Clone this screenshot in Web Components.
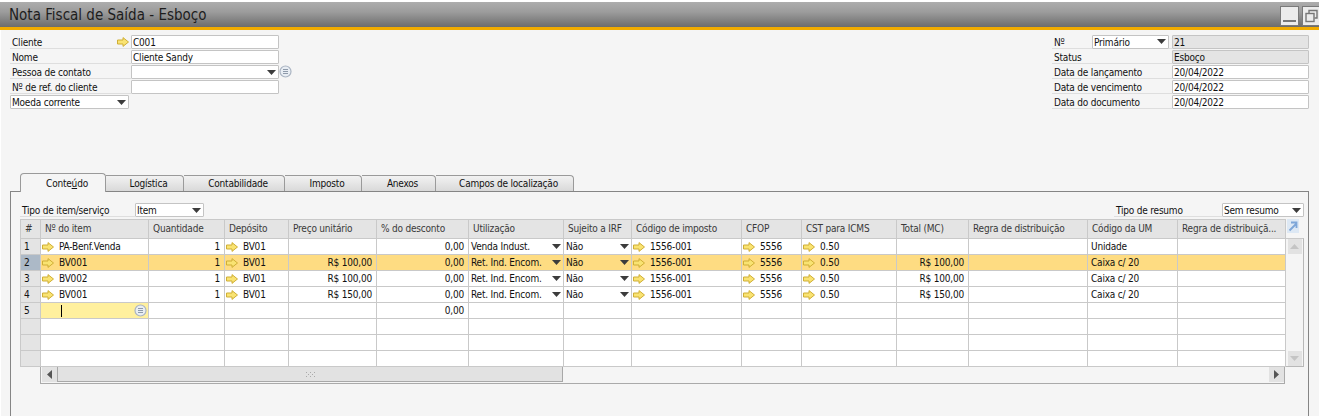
<!DOCTYPE html>
<html lang="pt">
<head>
<meta charset="utf-8">
<title>Nota Fiscal de Saída - Esboço</title>
<style>
    html, body { margin: 0; padding: 0; background: #fff; }
    body { font: 10px "DejaVu Sans Condensed", "DejaVu Sans", sans-serif; letter-spacing: -0.2px; color: #111; }
</style>
</head>
<body>
<sap-window>
    <sap-titlebar>Nota Fiscal de Saída - Esboço</sap-titlebar>
    <sap-header>
        <sap-form slot="left" style="--label-w:121px">
            <sap-row arrow>Cliente<sap-field slot="control" style="width:148px">C001</sap-field></sap-row>
            <sap-row>Nome<sap-field slot="control" style="width:148px">Cliente Sandy</sap-field></sap-row>
            <sap-row>Pessoa de contato<sap-field slot="control" dropdown style="width:148px"></sap-field><sap-info slot="control"></sap-info></sap-row>
            <sap-row>Nº de ref. do cliente<sap-field slot="control" style="width:148px"></sap-field></sap-row>
            <sap-field dropdown style="width:119px">Moeda corrente</sap-field>
        </sap-form>
        <sap-form slot="right" style="--label-w:120px">
            <sap-row><sap-number-label slot="label"></sap-number-label><sap-field slot="control" readonly style="width:137px">21</sap-field></sap-row>
            <sap-row>Status<sap-field slot="control" readonly style="width:137px">Esboço</sap-field></sap-row>
            <sap-row>Data de lançamento<sap-field slot="control" style="width:137px">20/04/2022</sap-field></sap-row>
            <sap-row>Data de vencimento<sap-field slot="control" style="width:137px">20/04/2022</sap-field></sap-row>
            <sap-row>Data do documento<sap-field slot="control" style="width:137px">20/04/2022</sap-field></sap-row>
        </sap-form>
    </sap-header>
    <sap-tabs>
        <sap-tab slot="tabs" active style="width:86px">Conte<u>ú</u>do</sap-tab>
        <sap-tab slot="tabs" style="width:78px">Logística</sap-tab>
        <sap-tab slot="tabs" style="width:101px">Contabilidade</sap-tab>
        <sap-tab slot="tabs" style="width:77px">Imposto</sap-tab>
        <sap-tab slot="tabs" style="width:74px">Anexos</sap-tab>
        <sap-tab slot="tabs" style="width:138px">Campos de localização</sap-tab>
        <sap-toolbar>
            <sap-form slot="left" style="--label-w:115px"><sap-row>Tipo de item/serviço<sap-field slot="control" dropdown style="width:69px">Item</sap-field></sap-row></sap-form>
            <sap-form slot="right" style="--label-w:108px"><sap-row>Tipo de resumo<sap-field slot="control" dropdown style="width:82px">Sem resumo</sap-field></sap-row></sap-form>
        </sap-toolbar>
        <sap-grid></sap-grid>
    </sap-tabs>
</sap-window>

<script>
const ARROW_SVG = `<svg width="12" height="10" viewBox="0 0 12 10" style="display:block;flex:none"><path d="M.5 3H6V.6L11.500 5 6 9.400V7H.5Z" fill="#f9e372" stroke="#cfae35" stroke-width="1"/></svg>`;
const CARET_SVG = `<svg width="9" height="5" viewBox="0 0 9 5" style="display:block;flex:none"><path d="M0 0H9L4.500 5Z" fill="#3c3c3c"/></svg>`;
const INFO_SVG = `<svg width="13" height="13" viewBox="0 0 13 13" style="display:block;flex:none"><circle cx="6.500" cy="6.500" r="5.500" fill="#e8edf3" stroke="#aab4c2" stroke-width="1.200"/><path d="M4 4.500H9M4 6.500H9M4 8.500H9" stroke="#8e9aaa" stroke-width="1"/></svg>`;

class SapWindow extends HTMLElement {
    connectedCallback() {
        this.attachShadow({ mode: 'open' });
        this.shadowRoot.innerHTML = `
      <style>
        :host { display: flex; flex-direction: column; height: 416px; overflow: hidden; background: #f5f5f5; box-shadow: inset 1px 0 #fff; }
      </style>
      <slot></slot>
    `;
    }
}

class SapTitlebar extends HTMLElement {
    connectedCallback() {
        this.attachShadow({ mode: 'open' });
        this.shadowRoot.innerHTML = `
      <style>
        :host { display: block; background: #fff; padding-top: 2px; flex: none; }
        .bar {
          height: 25px;
          box-sizing: border-box;
          background: linear-gradient(#adadad, #9c9c9c 40%, #6c6c6c);
          display: flex;
          align-items: center;
          justify-content: space-between;
          padding-left: 9px;
          font-size: 15px;
          letter-spacing: 0;
          color: #1d1d1d;
        }
        .line { height: 3px; background: #f0ab00; }
        .btns { display: flex; gap: 3px; margin-top: 3px; }
        .btn { box-sizing: border-box; width: 19px; height: 20px; border: 1px solid #7a7a7a; background: #ececec; display: flex; align-items: center; justify-content: center; }
        .btn:last-child { width: 17px; border-right: 0; }
      </style>
      <div class="bar">
        <span><slot></slot></span>
        <div class="btns">
          <div class="btn"><svg width="15" height="16" viewBox="0 0 15 16"><rect x="1" y="12" width="13" height="2" fill="#777"/></svg></div>
          <div class="btn"><svg width="15" height="16" viewBox="0 0 15 16" fill="none" stroke="#777" stroke-width="1.400"><path d="M5 5V2.500H13V10H10.500"/><rect x="2" y="5.500" width="8" height="8"/></svg></div>
        </div>
      </div>
      <div class="line"></div>
    `;
    }
}

class SapHeader extends HTMLElement {
    connectedCallback() {
        this.attachShadow({ mode: 'open' });
        this.shadowRoot.innerHTML = `
      <style>
        :host { display: flex; justify-content: space-between; padding: 5px 10px 0 10px; flex: none; }
      </style>
      <slot name="left"></slot>
      <slot name="right"></slot>
    `;
    }
}

class SapForm extends HTMLElement {
    connectedCallback() {
        this.attachShadow({ mode: 'open' });
        this.shadowRoot.innerHTML = `
      <style>
        :host { display: flex; flex-direction: column; gap: 1px; }
      </style>
      <slot></slot>
    `;
    }
}

class SapRow extends HTMLElement {
    connectedCallback() {
        this.attachShadow({ mode: 'open' });
        const arrow = this.hasAttribute('arrow') ? `<span class="arrow">${ARROW_SVG}</span>` : '';
        this.shadowRoot.innerHTML = `
      <style>
        :host { display: flex; height: 14px; }
        .label {
          box-sizing: border-box;
          width: var(--label-w, 120px);
          height: 14px;
          padding-left: 2px;
          line-height: 14px;
          border-bottom: 1px solid #dedede;
          display: flex;
          justify-content: space-between;
          align-items: center;
          white-space: nowrap;
          flex: none;
        }
        .t { padding-top: 2px; }
        .arrow { margin-right: 2px; }
      </style>
      <div class="label"><span class="t"><slot></slot></span><slot name="label"></slot>${arrow}</div>
      <slot name="control"></slot>
    `;
    }
}

class SapField extends HTMLElement {
    connectedCallback() {
        this.attachShadow({ mode: 'open' });
        const caret = this.hasAttribute('dropdown') ? `<span class="caret">${CARET_SVG}</span>` : '';
        this.shadowRoot.innerHTML = `
      <style>
        :host {
          display: flex;
          box-sizing: border-box;
          height: 14px;
          padding: 0 2px 0 1px;
          line-height: 12px;
          background: #fff;
          border: 1px solid #c4c4c4;
          border-radius: 1px;
          justify-content: space-between;
          align-items: center;
          white-space: nowrap;
          flex: none;
        }
        :host([readonly]) { background: #e4e4e4; }
        .t { padding-top: 2px; }
      </style>
      <span class="t"><slot></slot></span>${caret}
    `;
    }
}

class SapNumberLabel extends HTMLElement {
    connectedCallback() {
        this.attachShadow({ mode: 'open' });
        this.shadowRoot.innerHTML = `
      <style>
        :host { display: flex; align-items: center; width: 118px; height: 13px; }
        span { width: 38px; padding-top: 2px; }
      </style>
      <span>Nº</span>
      <sap-field dropdown style="width:77px">Primário</sap-field>
    `;
    }
}

class SapInfo extends HTMLElement {
    connectedCallback() {
        this.attachShadow({ mode: 'open' });
        this.shadowRoot.innerHTML = `
      <style>:host { display: block; flex: none; }</style>
      ${INFO_SVG}
    `;
    }
}

class SapTabs extends HTMLElement {
    connectedCallback() {
        this.attachShadow({ mode: 'open' });
        this.shadowRoot.innerHTML = `
      <style>
        :host { display: flex; flex-direction: column; flex: 1; margin: 64px 10px 0 10px; min-height: 0; }
        .strip { display: flex; align-items: flex-end; height: 18px; padding-left: 10px; position: relative; z-index: 1; }
        .panel {
          flex: 1;
          border: 1px solid #858585;
          border-bottom: 0;
          padding: 11px 0 0 9px;
        }
      </style>
      <div class="strip"><slot name="tabs"></slot></div>
      <div class="panel"><slot></slot></div>
    `;
    }
}

class SapTab extends HTMLElement {
    connectedCallback() {
        this.attachShadow({ mode: 'open' });
        this.shadowRoot.innerHTML = `
      <style>
        :host {
          display: flex;
          box-sizing: border-box;
          height: 16px;
          padding-left: 8px;
          align-items: center;
          justify-content: center;
          background: linear-gradient(#f2f2f2, #d9d9d9);
          border: 1px solid #9a9a9a;
          border-bottom: 0;
          border-left: 0;
          border-radius: 0 4px 0 0;
          white-space: nowrap;
          flex: none;
        }
        :host([active]) {
          height: 19px;
          margin-bottom: -1px;
          background: #f5f5f5;
          border-left: 1px solid #9a9a9a;
          border-radius: 4px 4px 0 0;
        }
      </style>
      <slot></slot>
    `;
    }
}

class SapToolbar extends HTMLElement {
    connectedCallback() {
        this.attachShadow({ mode: 'open' });
        this.shadowRoot.innerHTML = `
      <style>
        :host { display: flex; justify-content: space-between; width: 1284px; box-sizing: border-box; height: 16px; }
      </style>
      <slot name="left"></slot>
      <slot name="right"></slot>
    `;
    }
}

const COLUMNS = [
    ['#', 20], ['Nº do item', 108], ['Quantidade', 76], ['Depósito', 64], ['Preço unitário', 88],
    ['% do desconto', 92], ['Utilização', 95], ['Sujeito a IRF', 68], ['Código de imposto', 110],
    ['CFOP', 60], ['CST para ICMS', 95], ['Total (MC)', 72], ['Regra de distribuição', 119],
    ['Código da UM', 90], ['Regra de distribuiçã...', 108]
];

const ROWS = [
    ['PA-Benf.Venda', '1', 'BV01', '', '0,00', 'Venda Indust.', 'Não', '1556-001', '5556', '0.50', '', '', 'Unidade', ''],
    ['BV001', '1', 'BV01', 'R$ 100,00', '0,00', 'Ret. Ind. Encom.', 'Não', '1556-001', '5556', '0.50', 'R$ 100,00', '', 'Caixa c/ 20', ''],
    ['BV002', '1', 'BV01', 'R$ 100,00', '0,00', 'Ret. Ind. Encom.', 'Não', '1556-001', '5556', '0.50', 'R$ 100,00', '', 'Caixa c/ 20', ''],
    ['BV001', '1', 'BV01', 'R$ 150,00', '0,00', 'Ret. Ind. Encom.', 'Não', '1556-001', '5556', '0.50', 'R$ 150,00', '', 'Caixa c/ 20', '']
];

// column kinds, by index in a row: a = arrow link, r = right aligned, d = dropdown
const KINDS = ['a', 'r', 'a', 'r', 'r', 'd', 'd', 'a', 'a', 'a', 'r', '', '', ''];

class SapGrid extends HTMLElement {
    renderCell(kind, text, extra) {
        if (text === '') return `<div class="c ${extra}"></div>`;
        if (kind === 'a') return `<div class="c link ${extra}">${ARROW_SVG}<span>${text}</span></div>`;
        if (kind === 'd') return `<div class="c drop ${extra}"><span>${text}</span>${CARET_SVG}</div>`;
        if (kind === 'r') return `<div class="c right ${extra}">${text}</div>`;
        return `<div class="c ${extra}">${text}</div>`;
    }

    connectedCallback() {
        this.attachShadow({ mode: 'open' });
        let cells = COLUMNS.map(c => `<div class="c head">${c[0]}</div>`).join('');
        ROWS.forEach((row, i) => {
            const sel = i === 1 ? 'sel' : '';
            cells += `<div class="c num ${i === 1 ? 'numsel' : ''}">${i + 1}</div>`;
            cells += row.map((text, j) => this.renderCell(KINDS[j], text, sel)).join('');
        });
        // row 5 holds the cursor, the rest are empty
        cells += `<div class="c num">5</div><div class="c active"><i class="cursor"></i>${INFO_SVG}</div>`;
        cells += ROWS[0].slice(1).map((t, j) => this.renderCell(j === 3 ? 'r' : '', j === 3 ? '0,00' : '', '')).join('');
        for (let r = 0; r < 3; r++) {
            cells += COLUMNS.map((c, j) => `<div class="c ${j === 0 ? 'num' : ''}"></div>`).join('');
        }
        const cols = COLUMNS.map(c => c[1] + 'px').join(' ');
        this.shadowRoot.innerHTML = `
      <style>
        :host { display: grid; grid-template-columns: 1266px 18px; grid-template-rows: auto 17px; width: 1284px; color: #111; }
        .table {
          display: grid;
          grid-template-columns: ${cols};
          grid-template-rows: 19px repeat(8, 16px);
          border-left: 1px solid #c9c9c9;
          border-top: 1px solid #c9c9c9;
          background: #fff;
        }
        .c {
          box-sizing: border-box;
          border-right: 1px solid #c9c9c9;
          border-bottom: 1px solid #c9c9c9;
          padding: 0 4px 0 3px;
          line-height: 15px;
          white-space: nowrap;
          overflow: hidden;
          display: flex;
          align-items: center;
        }
        .head { background: #e4e4e4; color: #3a3a3a; padding-left: 4px; padding-bottom: 1px; }
        .num { background: #e4e4e4; padding-left: 3px; }
        .numsel { background: #acb9c7; }
        .sel { background: #fedc82; }
        .active { background: #fff09e; justify-content: space-between; padding: 0 1px 0 20px; }
        .cursor { width: 1px; height: 12px; background: #000; }
        .right { justify-content: flex-end; }
        .link { padding-left: 1px; }
        .link span { margin-left: 5px; }
        .drop { justify-content: space-between; padding: 0 2px 0 2px; }
        .side { display: flex; flex-direction: column; }
        .corner { height: 19px; display: flex; align-items: flex-start; padding-left: 1px; }
        .vtrack {
          flex: 1;
          box-sizing: border-box;
          border-top: 1px solid #c9c9c9;
          border-right: 1px solid #b8b8b8;
          border-bottom: 1px solid #b8b8b8;
          display: flex;
          flex-direction: column;
          justify-content: space-between;
          align-items: center;
        }
        .vbtn { width: 14px; height: 15px; background: #e2e2e2; display: flex; align-items: center; justify-content: center; }
        .hscroll {
          margin-left: 20px;
          box-sizing: border-box;
          height: 17px;
          border-left: 1px solid #aaa;
          border-right: 1px solid #aaa;
          border-bottom: 1px solid #aaa;
          padding: 0 0 1px 1px;
          display: flex;
          align-items: stretch;
          width: 1245px;
        }
        .hbtn { width: 15px; background: #e2e2e2; display: flex; align-items: center; justify-content: center; flex: none; }
        .thumb {
          width: 506px;
          box-sizing: border-box;
          background: #e2e2e2;
          border: 1px solid #a8a8a8;
          border-top: 0;
          display: flex;
          align-items: center;
          justify-content: center;
          flex: none;
        }
        .fill { flex: 1; }
      </style>
      <div class="table">${cells}</div>
      <div class="side">
        <div class="corner">
          <svg width="12" height="14" viewBox="0 0 12 14"><rect x="0" y="0" width="12" height="14" fill="#dde8f4"/><path d="M2.500 11.500L9 5M4 3.500H9.500V9" fill="none" stroke="#7ea6d8" stroke-width="1.800"/></svg>
        </div>
        <div class="vtrack">
          <div class="vbtn"><svg width="9" height="5" viewBox="0 0 9 5"><path d="M0 5H9L4.500 0Z" fill="#c4c4c4"/></svg></div>
          <div class="vbtn"><svg width="9" height="5" viewBox="0 0 9 5"><path d="M0 0H9L4.500 5Z" fill="#c4c4c4"/></svg></div>
        </div>
      </div>
      <div class="hscroll">
        <div class="hbtn"><svg width="5" height="9" viewBox="0 0 5 9"><path d="M5 0V9L0 4.500Z" fill="#555"/></svg></div>
        <div class="thumb"><svg width="9" height="5" viewBox="0 0 9 5" fill="#aaa"><path d="M0 0h1v1H0zM4 0h1v1H4zM8 0h1v1H8zM0 4h1v1H0zM4 4h1v1H4zM8 4h1v1H8zM2 2h1v1H2zM6 2h1v1H6z"/></svg></div>
        <div class="fill"></div>
        <div class="hbtn"><svg width="5" height="9" viewBox="0 0 5 9"><path d="M0 0V9L5 4.500Z" fill="#555"/></svg></div>
      </div>
    `;
    }
}

customElements.define('sap-window', SapWindow);
customElements.define('sap-titlebar', SapTitlebar);
customElements.define('sap-header', SapHeader);
customElements.define('sap-form', SapForm);
customElements.define('sap-row', SapRow);
customElements.define('sap-field', SapField);
customElements.define('sap-number-label', SapNumberLabel);
customElements.define('sap-info', SapInfo);
customElements.define('sap-tabs', SapTabs);
customElements.define('sap-tab', SapTab);
customElements.define('sap-toolbar', SapToolbar);
customElements.define('sap-grid', SapGrid);
</script>
</body>
</html>
